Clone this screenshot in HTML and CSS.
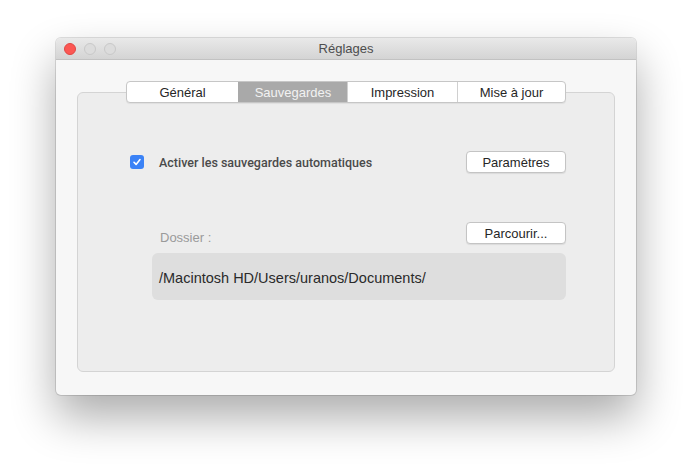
FILE: index.html
```html
<!DOCTYPE html>
<html>
    <head>
        <link rel="stylesheet" href="styles.css">
        <title>Réglages</title>
    </head>

    <body>
        <div class="window">
            <div class="titlebar">
                <div class="traffic-lights">
                    <span class="light light-close"></span>
                    <span class="light"></span>
                    <span class="light"></span>
                </div>
                <div class="window-title">Réglages</div>
            </div>

            <div class="window-content">
                <div class="tab-bar">
                    <button class="tab tab-general">Général</button>
                    <button class="tab tab-backup active">Sauvegardes</button>
                    <button class="tab tab-print">Impression</button>
                    <button class="tab tab-update">Mise à jour</button>
                </div>

                <div class="group-box">
                    <div class="option-row">
                        <label class="checkbox-label">
                            <span class="checkbox">
                                <svg width="10" height="10" viewBox="0 0 10 10">
                                    <path d="M2 5.3 L4.1 7.4 L8 2.6" fill="none" stroke="white" stroke-width="1.6" stroke-linecap="round" stroke-linejoin="round"/>
                                </svg>
                            </span>
                            Activer les sauvegardes automatiques
                        </label>
                        <button class="push-button">Paramètres</button>
                    </div>

                    <div class="folder-section">
                        <div class="folder-header">
                            <span class="folder-label">Dossier :</span>
                            <button class="push-button">Parcourir...</button>
                        </div>
                        <div class="path-field">/Macintosh HD/Users/uranos/Documents/</div>
                    </div>
                </div>
            </div>
        </div>
    </body>
</html>
```

FILE: styles.css
```css
html, body {
    height: 100%;
}

body {
    margin: 0;
    padding-top: 38px;
    box-sizing: border-box;
    background-color: white;
    font-family: "Liberation Sans", Arial, sans-serif;
}

.window {
    width: 580px;
    height: 357px;
    margin-left: 56px;
    border-radius: 5px;
    background-color: #f7f7f7;
    box-shadow: 0 0 0 1px rgba(0,0,0,0.12), 0 22px 45px rgba(0,0,0,0.33);
    display: flex;
    flex-direction: column;
    overflow: hidden;
}

.titlebar {
    height: 21px;
    position: relative;
    background: linear-gradient(to bottom, #e9e9e9, #d4d4d4);
    border-bottom: 1px solid #c2c2c2;
    display: flex;
    align-items: center;
    justify-content: center;
    flex-shrink: 0;
}

.traffic-lights {
    position: absolute;
    left: 8px;
    top: 5px;
    display: flex;
    gap: 8px;
}

.light {
    width: 12px;
    height: 12px;
    border-radius: 50%;
    background-color: #dcdcdc;
    box-sizing: border-box;
    border: 1px solid #c8c8c8;
}

.light-close {
    background-color: #fc5753;
    border-color: #df4744;
}

.window-title {
    font-size: 13px;
    color: #4d4d4d;
}

.window-content {
    padding: 21px 21px 0 21px;
    display: flex;
    flex-direction: column;
    align-items: center;
}

.tab-bar {
    display: flex;
    height: 22px;
    position: relative;
    z-index: 1;
    margin-bottom: -11px;
    border: 1px solid #c6c6c6;
    border-radius: 4px;
    background-color: white;
    box-sizing: border-box;
    overflow: hidden;
    box-shadow: 0 1px 1px rgba(0,0,0,0.06);
}

.tab {
    border: none;
    border-left: 1px solid #d0d0d0;
    background: none;
    font-family: "Liberation Sans", Arial, sans-serif;
    font-size: 13px;
    color: #262626;
    padding: 0;
}

.tab-general { width: 111px; border-left: none; }
.tab-backup { width: 109px; }
.tab-print { width: 110px; }
.tab-update { width: 108px; }

.tab.active {
    background-color: #a9a9a9;
    color: #f2f2f2;
    border-left-color: #a9a9a9;
}

.group-box {
    width: 538px;
    height: 280px;
    box-sizing: border-box;
    border: 1px solid #d4d4d4;
    border-radius: 6px;
    background-color: #ededed;
    padding: 58px 48px 0 52px;
}

.option-row {
    display: flex;
    align-items: center;
    justify-content: space-between;
    height: 22px;
}

.checkbox-label {
    display: flex;
    align-items: center;
    gap: 15px;
    font-family: Roboto, "Liberation Sans", sans-serif;
    font-size: 12.5px;
    font-weight: 500;
    color: #4a4a4a;
}

.checkbox {
    width: 14px;
    height: 14px;
    border-radius: 3px;
    background-color: #3b82f6;
    display: flex;
    align-items: center;
    justify-content: center;
}

.push-button {
    width: 100px;
    height: 22px;
    background-color: white;
    border: 1px solid #c4c4c4;
    border-radius: 4px;
    box-shadow: 0 1px 1px rgba(0,0,0,0.08);
    font-family: "Liberation Sans", Arial, sans-serif;
    font-size: 13px;
    color: #262626;
    padding: 0;
}

.folder-section {
    margin-top: 49px;
    margin-left: 22px;
}

.folder-header {
    display: flex;
    align-items: flex-end;
    justify-content: space-between;
    height: 22px;
}

.folder-label {
    font-size: 13px;
    color: #9a9a9a;
    margin-left: 8px;
    margin-bottom: -1px;
}

.path-field {
    margin-top: 9px;
    height: 47px;
    box-sizing: border-box;
    border-radius: 6px;
    background-color: #dedede;
    padding-left: 7px;
    padding-top: 3px;
    display: flex;
    align-items: center;
    font-size: 14.5px;
    color: #2a2a2a;
}
```
